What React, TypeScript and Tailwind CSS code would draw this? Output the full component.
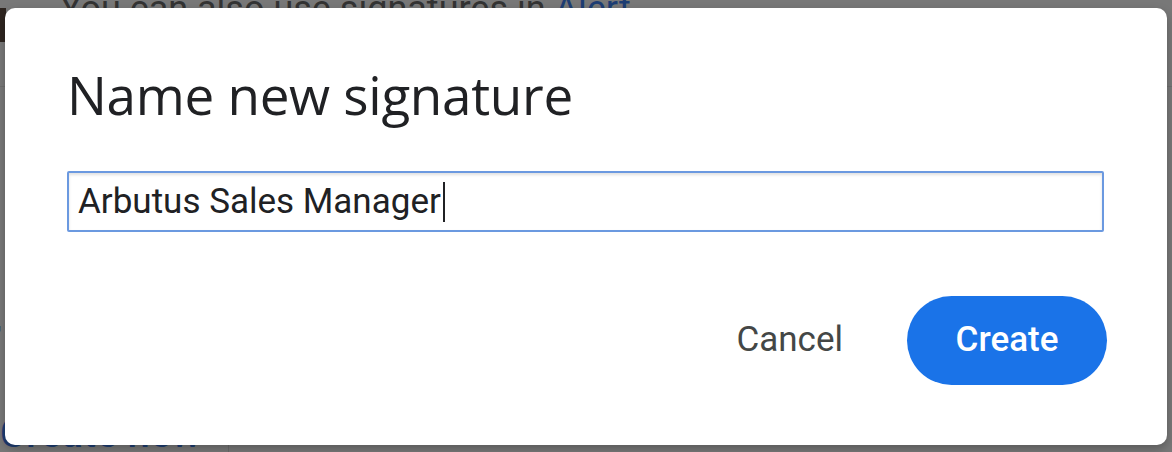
import React from "react";

export default function App() {
  return (
    <div className="relative w-[1172px] h-[452px] overflow-hidden bg-[#787878]" style={{ fontFamily: "Roboto, 'Liberation Sans', sans-serif" }}>
      {/* dimmed page behind the dialog */}
      <div className="flex flex-col w-[1172px] h-[452px]">
        <div className="h-[87px] border-b border-[#6e6e6e] flex">
          <div className="w-[6px] h-[34px] mt-[8px] bg-[#2e2520]" />
          <div className="ml-[54px] mt-[-11px] whitespace-nowrap text-[36px] leading-[40px] text-[#333333]">
            You can also use signatures in <span className="text-[#1d3d73]">Alert</span>
          </div>
        </div>
        <div className="flex-1 flex flex-col ml-[-22px] text-[#1e1e1e]">
          <div className="mt-[30px] text-[40px] leading-[48px] font-bold">e</div>
          <div className="mt-[4px] text-[36px] leading-[48px] text-[#333]">x</div>
          <div className="mt-[6px] text-[40px] leading-[48px]">a</div>
          <div className="mt-[40px] ml-[8px] text-[40px] leading-[48px] font-bold">r</div>
        </div>
        <div className="flex items-end h-[36px]">
          <div className="whitespace-nowrap text-[40px] leading-[36px] font-medium text-[#1d3d73] w-[228px]">Create new</div>
          <div className="w-px h-[10px] bg-[#6a6a6a]" />
        </div>
      </div>

      {/* dialog */}
      <div className="absolute left-[5px] top-[8px] w-[1162px] h-[437px] rounded-[10px] bg-white shadow-[0_4px_10px_rgba(0,0,0,0.25)] flex flex-col px-[62px] pt-[47px]">
        <h1 className="text-[53px] leading-[80px] text-[#202124] font-normal" style={{ fontFamily: "'Open Sans', Roboto, sans-serif", letterSpacing: "-0.3px" }}>
          Name new signature
        </h1>
        <div className="mt-[36px] w-[1037px] h-[61px] border-2 border-[#6b99e0] rounded-[2px] shadow-[inset_0_2px_3px_rgba(0,0,0,0.12)] flex items-center pl-[9px]">
          <span className="text-[35px] text-[#202124] leading-none">Arbutus Sales Manager</span>
          <span className="ml-[2px] w-[2px] h-[40px] bg-[#202124]" />
        </div>
        <div className="mt-[64px] flex justify-end items-center gap-[64px] mr-[-2px]">
          <span className="text-[35px] text-[#444746]">Cancel</span>
          <button className="w-[200px] h-[89px] rounded-full bg-[#1a73e8] text-white text-[35px] flex items-center justify-center" style={{ fontWeight: 500 }}>
            Create
          </button>
        </div>
      </div>
    </div>
  );
}
